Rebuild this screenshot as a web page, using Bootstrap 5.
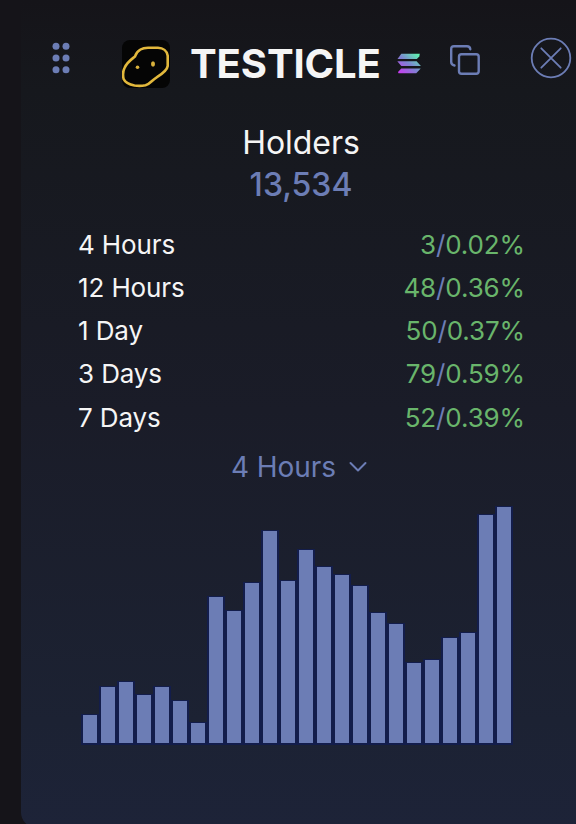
<!DOCTYPE html>
<html lang="en">
<head>
<meta charset="utf-8">
<meta name="viewport" content="width=device-width, initial-scale=1">
<title>Holders</title>
<link href="https://cdn.jsdelivr.net/npm/bootstrap@5.3.0/dist/css/bootstrap.min.css" rel="stylesheet">
<style>
  body { background: #151419; font-family: Inter, "Liberation Sans", sans-serif; color: #f5f5f5; height: 824px; overflow: hidden; }
  .panel { width: 560px; height: 828px; margin-left: 21px; padding-top: 36px; border-radius: 0 0 16px 16px; background: linear-gradient(#151419 0, #16181d 90px, #1a1c28 410px, #1c2233 720px, #1d2338 828px); }
  .peri { color: #6c7db5; }
  .gain { color: #69b56b; }
  .head { height: 56px; padding: 0 9px 0 31px; }
  .btn-bare { padding: 0; border: 0; line-height: 0; color: #6c7db5; }
  .drag { margin: 6px 52px 0 0; }
  .avatar { margin: 4px 21px 0 0; }
  .token { font-size: 40px; line-height: 48px; font-weight: 700; margin: 4px 0 0 -1px; width: 206px; white-space: nowrap; letter-spacing: -.1px; }
  .chain { margin-top: 17px; width: 25px; }
  .copy { margin: 8px 0 0 28px; }
  .close-x { margin: 1px 0 0 auto; }
  .label { font-size: 32px; line-height: 42px; margin-top: 30px; letter-spacing: -.05px; }
  .total { font-size: 32px; line-height: 42px; font-weight: 500; }
  .stats { padding: 16.8px 56px 0 57px; font-size: 26px; line-height: 43.2px; letter-spacing: -.12px; }
  .period { font-size: 28px; line-height: 40px; margin-top: 8.2px; padding-right: 4px; letter-spacing: -.05px; }
  .chevron { margin-left: 13px; }
  .chart { height: 240px; margin: 18px 0 0 60px; }
  .bar { width: 14px; box-sizing: content-box; background: #6c7db5; border: solid #131d4b; border-width: 1px 2px 2px; }
</style>
<script src="https://cdn.jsdelivr.net/npm/bootstrap@5.3.0/dist/js/bootstrap.bundle.min.js"></script>
</head>
<body>
<main class="panel">
  <header class="head d-flex align-items-start">
    <button class="btn btn-bare drag" aria-label="Move">
      <svg width="18" height="32" viewBox="0 0 18 32" fill="currentColor"><circle cx="4" cy="4.3" r="3.5"/><circle cx="14" cy="4.3" r="3.5"/><circle cx="4" cy="16" r="3.5"/><circle cx="14" cy="16" r="3.5"/><circle cx="4" cy="27.7" r="3.5"/><circle cx="14" cy="27.7" r="3.5"/></svg>
    </button>
    <svg class="avatar flex-shrink-0" width="48" height="48" viewBox="0 0 48 48"><rect width="48" height="48" rx="8" fill="#050505"/><path d="M13 16.5C14 13 16 11 18.5 9.5C21 8 23 7.8 26 7.8H36C41 8 45 11 45.7 15.7V26C45 31 39 34.5 34.7 37.3C30 40 28 44 23.5 45.3Q18 46.3 12.5 45.5C7 44.5 3 42 1.6 39C.7 35 1 31 2.5 28C5 22 10 19 13 16.5Z" fill="none" stroke="#e2b83c" stroke-width="2.6"/><circle cx="15.5" cy="27.3" r="1.8" fill="#d9b13c"/><ellipse cx="31" cy="24" rx="2" ry="2.7" fill="#d9b13c"/></svg>
    <h1 class="token">TESTICLE</h1>
    <svg class="chain flex-shrink-0" width="25" height="21" viewBox="0 0 25 21"><defs><linearGradient id="sol" gradientUnits="userSpaceOnUse" x1="3" y1="20" x2="20" y2="0"><stop offset="0" stop-color="#c93af0"/><stop offset=".5" stop-color="#7d83d2"/><stop offset="1" stop-color="#5ff0b0"/></linearGradient></defs><g fill="url(#sol)"><path d="M5.3 .8H23.8L23.3 3.6L20.8 6H1.5Z"/><path d="M1.3 8.3H20.6L24.9 13H5.3Z"/><path d="M5.3 15.4H24.7L20.3 20.3H2.5L2 19Z"/></g></svg>
    <button class="btn btn-bare copy" aria-label="Copy">
      <svg width="32" height="32" viewBox="0 0 32 32" fill="none" stroke="currentColor" stroke-width="2.4" stroke-linecap="round" stroke-linejoin="round"><rect x="10" y="10.2" width="19.7" height="19.5" rx="2.5"/><path d="M5.5 21.5C3 21 2.2 20 2.2 18V5.2Q2.2 2.3 5 2.3H18Q21 2.3 21.3 5.2"/></svg>
    </button>
    <button class="btn btn-bare close-x" aria-label="Close">
      <svg width="42" height="42" viewBox="0 0 42 42" fill="none" stroke="currentColor" stroke-width="1.8" stroke-linecap="round"><circle cx="21" cy="21" r="19.3"/><path d="M11.3 11.3L30.7 30.7M30.7 11.3L11.3 30.7"/></svg>
    </button>
  </header>
  <div class="label text-center">Holders</div>
  <div class="total peri text-center">13,534</div>
  <div class="stats">
    <div class="d-flex justify-content-between"><span>4 Hours</span><span class="gain">3<span class="peri">/</span>0.02%</span></div>
    <div class="d-flex justify-content-between"><span>12 Hours</span><span class="gain">48<span class="peri">/</span>0.36%</span></div>
    <div class="d-flex justify-content-between"><span>1 Day</span><span class="gain">50<span class="peri">/</span>0.37%</span></div>
    <div class="d-flex justify-content-between"><span>3 Days</span><span class="gain">79<span class="peri">/</span>0.59%</span></div>
    <div class="d-flex justify-content-between"><span>7 Days</span><span class="gain">52<span class="peri">/</span>0.39%</span></div>
  </div>
  <div class="period peri d-flex justify-content-center align-items-center">
    <span>4 Hours</span>
    <svg class="chevron" width="18" height="12" viewBox="0 0 18 12" fill="none" stroke="currentColor" stroke-width="2" stroke-linecap="round" stroke-linejoin="round"><path d="M1.5 2L9 9.5L16.5 2"/></svg>
  </div>
  <div class="chart d-flex align-items-end">
    <div class="bar" style="height:28px"></div><div class="bar" style="height:56px"></div><div class="bar" style="height:61px"></div><div class="bar" style="height:48px"></div><div class="bar" style="height:56px"></div><div class="bar" style="height:42px"></div>
    <div class="bar" style="height:20px"></div><div class="bar" style="height:146px"></div><div class="bar" style="height:132px"></div><div class="bar" style="height:160px"></div><div class="bar" style="height:212px"></div><div class="bar" style="height:162px"></div>
    <div class="bar" style="height:193px"></div><div class="bar" style="height:176px"></div><div class="bar" style="height:168px"></div><div class="bar" style="height:157px"></div><div class="bar" style="height:130px"></div><div class="bar" style="height:119px"></div>
    <div class="bar" style="height:80px"></div><div class="bar" style="height:83px"></div><div class="bar" style="height:105px"></div><div class="bar" style="height:110px"></div><div class="bar" style="height:228px"></div><div class="bar" style="height:236px"></div>
  </div>
</main>
</body>
</html>
